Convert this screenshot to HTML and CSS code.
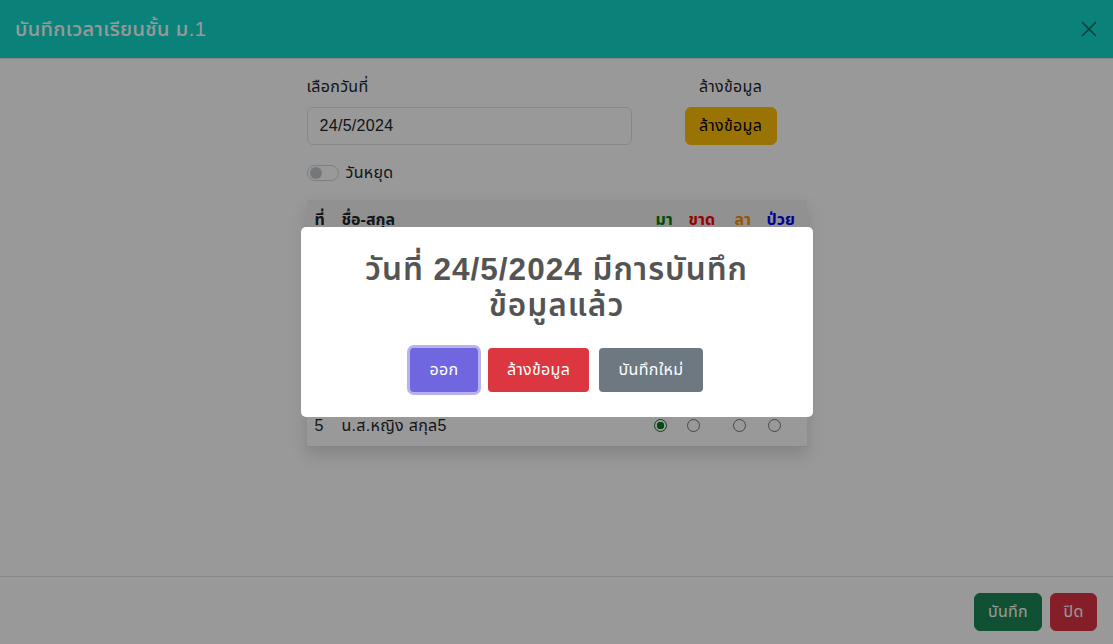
FILE: index.html
```html
<!DOCTYPE html>
<html lang="th">
<head>
<meta charset="utf-8">
<title>บันทึกเวลาเรียน</title>
<link rel="stylesheet" href="styles.css">
</head>
<body>
<div class="modal">
  <header class="modal-header">
    <h5 class="modal-title">บันทึกเวลาเรียนชั้น ม.1</h5>
    <button class="btn-close" aria-label="close">
      <svg width="16" height="16" viewBox="0 0 16 16"><path d="M1 1L15 15M15 1L1 15" stroke="#000" stroke-width="1.6" fill="none"/></svg>
    </button>
  </header>
  <main class="modal-body">
    <div class="content">
      <div class="top-row">
        <div class="field">
          <label class="form-label">เลือกวันที่</label>
          <div class="input">24/5/2024</div>
        </div>
        <div class="field center">
          <label class="form-label">ล้างข้อมูล</label>
          <button class="btn btn-warning">ล้างข้อมูล</button>
        </div>
      </div>
      <div class="switch-row">
        <span class="switch"><span class="knob"></span></span>
        <span>วันหยุด</span>
      </div>
      <table class="table">
        <thead>
          <tr>
            <th class="c-no">ที่</th>
            <th class="c-name">ชื่อ-สกุล</th>
            <th class="c-r1 green">มา</th>
            <th class="c-r2 red">ขาด</th>
            <th class="c-r3 orange">ลา</th>
            <th class="c-r4 blue">ป่วย</th>
          </tr>
        </thead>
        <tbody>
          <tr><td>1</td><td>ด.ช.ชาย สกุล1</td><td><span class="radio on"></span></td><td><span class="radio"></span></td><td><span class="radio"></span></td><td><span class="radio r4"></span></td></tr>
          <tr><td>2</td><td>ด.ช.ชาย สกุล2</td><td><span class="radio on"></span></td><td><span class="radio"></span></td><td><span class="radio"></span></td><td><span class="radio r4"></span></td></tr>
          <tr><td>3</td><td>ด.ช.ชาย สกุล3</td><td><span class="radio on"></span></td><td><span class="radio"></span></td><td><span class="radio"></span></td><td><span class="radio r4"></span></td></tr>
          <tr><td>4</td><td>น.ส.หญิง สกุล4</td><td><span class="radio on"></span></td><td><span class="radio"></span></td><td><span class="radio"></span></td><td><span class="radio r4"></span></td></tr>
          <tr><td>5</td><td>น.ส.หญิง สกุล5</td><td><span class="radio on"></span></td><td><span class="radio"></span></td><td><span class="radio"></span></td><td><span class="radio r4"></span></td></tr>
        </tbody>
      </table>
    </div>
  </main>
  <footer class="modal-footer">
    <button class="btn btn-success">บันทึก</button>
    <button class="btn btn-danger">ปิด</button>
  </footer>
</div>

<div class="swal-backdrop">
  <div class="swal-popup">
    <h2 class="swal-title">วันที่ 24/5/2024 มีการบันทึก<br>ข้อมูลแล้ว</h2>
    <div class="swal-actions">
      <button class="swal-btn confirm">ออก</button>
      <button class="swal-btn deny">ล้างข้อมูล</button>
      <button class="swal-btn cancel">บันทึกใหม่</button>
    </div>
  </div>
</div>
</body>
</html>
```

FILE: styles.css
```css
* { box-sizing: border-box; }
html, body { margin: 0; padding: 0; }
body {
  width: 1113px;
  height: 644px;
  overflow: hidden;
  background: #fff;
  color: #212529;
  font-family: "Liberation Sans", "Noto Sans Thai", "Noto Sans", sans-serif;
  font-size: 16px;
  line-height: 24px;
  letter-spacing: 0.3px;
}

.modal {
  display: flex;
  flex-direction: column;
  height: 644px;
  background: #fff;
}

.modal-header {
  height: 59px;
  flex: none;
  display: flex;
  align-items: center;
  justify-content: space-between;
  padding: 0 16px 0 15px;
  background: #12d9ca;
  border-bottom: 1px solid #dee2e6;
}
.modal-title {
  margin: 0;
  color: #fff;
  font-size: 20px;
  font-weight: 500;
  line-height: 24px;
  letter-spacing: 0.4px;
}
.btn-close {
  border: 0;
  background: none;
  padding: 0;
  width: 16px;
  height: 16px;
  opacity: .5;
  display: flex;
}

.modal-body {
  flex: 1;
  padding: 16px;
}
.content {
  width: 500px;
  margin: 0 auto;
}
.top-row {
  display: grid;
  grid-template-columns: 325px 1fr;
  column-gap: 23px;
}
.field { display: flex; flex-direction: column; align-items: flex-start; }
.field.center { align-items: center; }
.form-label {
  margin-bottom: 8px;
  line-height: 24px;
}
.input {
  width: 100%;
  height: 38px;
  border: 1px solid #dee2e6;
  border-radius: 6px;
  padding: 6px 12px;
  line-height: 24px;
}

.btn {
  border: 1px solid transparent;
  border-radius: 6px;
  font-family: inherit;
  font-size: 16px;
  letter-spacing: inherit;
  line-height: 24px;
  padding: 6px 12px;
  height: 38px;
  cursor: pointer;
}
.btn-warning { background: #ffc107; border-color: #ffc107; color: #000; width: 92px; padding: 6px 0; }
.btn-success { background: #198754; border-color: #198754; color: #fff; width: 68px; padding: 6px 0; }
.btn-danger  { background: #dc3545; border-color: #dc3545; color: #fff; width: 47px; padding: 6px 0; }

.switch-row {
  display: flex;
  align-items: center;
  gap: 7px;
  margin-top: 16px;
  height: 24px;
}
.switch {
  width: 32px;
  height: 16px;
  border: 1px solid #ced4da;
  border-radius: 8px;
  display: flex;
  align-items: center;
  padding-left: 2px;
}
.knob {
  width: 12px;
  height: 12px;
  border-radius: 50%;
  background: #c4c8cb;
}

.table {
  width: 500px;
  margin-top: 15px;
  border-collapse: collapse;
  table-layout: fixed;
  box-shadow: 0 .5rem 1rem rgba(0,0,0,.15);
}
.table th, .table td {
  padding: 8px;
  height: 41px;
  border-bottom: 1px solid #dee2e6;
  text-align: left;
  white-space: nowrap;
}
.table thead th { background: #f2f2f2; font-weight: 700; letter-spacing: 0; }
.table tbody td { background: #fff; }
.c-no { width: 27px; }
.c-name { width: 314px; }
.c-r1 { width: 33px; }
.c-r2 { width: 46px; }
.c-r3 { width: 32px; }
.c-r4 { width: 48px; }
.green { color: #008000; }
.red { color: #ff0000; }
.orange { color: #ff8c00; }
.blue { color: #0000ff; }

.radio {
  display: inline-block;
  width: 13px;
  height: 13px;
  margin-left: -2px;
  border: 1px solid #767676;
  border-radius: 50%;
  vertical-align: -1px;
  background: #fff;
}
.radio.r4 { margin-left: 1px; }
.radio.on {
  border: 1.5px solid #0a7a1e;
  background: radial-gradient(circle, #0a7a1e 0 3.5px, #fff 4px);
}

.modal-footer {
  height: 68px;
  flex: none;
  display: flex;
  justify-content: flex-end;
  gap: 8px;
  padding: 16px 16px 0;
  border-top: 1px solid #dee2e6;
}

.swal-backdrop {
  position: fixed;
  inset: 0;
  background: rgba(0,0,0,.4);
  display: flex;
  align-items: center;
  justify-content: center;
}
.swal-popup {
  width: 512px;
  background: #fff;
  border-radius: 5px;
  padding: 0 0 20px;
  color: #545454;
  text-align: center;
}
.swal-title {
  margin: 0;
  padding: 24px 10px 0;
  font-size: 31.5px;
  line-height: 36px;
  font-weight: 600;
  color: #545454;
  letter-spacing: 1px;
  font-family: "Liberation Sans", "Noto Sans Thai", "Noto Sans", sans-serif;
}
.swal-actions {
  display: flex;
  justify-content: center;
  margin-top: 20px;
}
.swal-btn {
  margin: 5px;
  border: 0;
  border-radius: 4px;
  color: #fff;
  font-family: inherit;
  font-size: 16px;
  letter-spacing: inherit;
  line-height: 24px;
  height: 44px;
  padding: 10px 0;
  font-weight: 400;
}
.swal-btn.confirm { width: 68px; background: #7066e0; box-shadow: 0 0 0 3px rgba(112,102,224,.5); }
.swal-btn.deny { width: 101px; background: #dc3741; }
.swal-btn.cancel { width: 104px; background: #6e7881; }
```
